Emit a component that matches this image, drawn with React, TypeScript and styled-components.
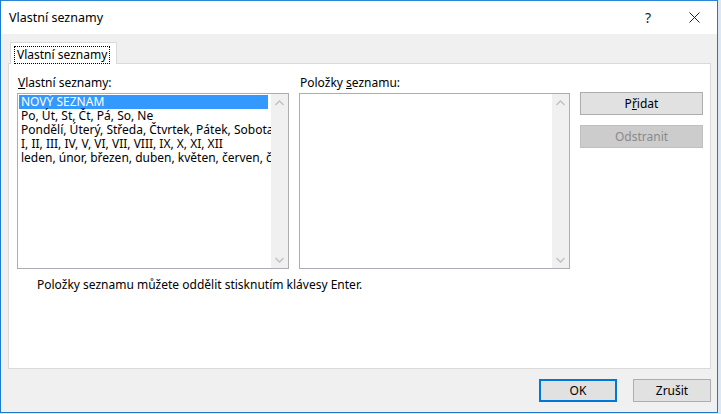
import React from "react";
import styled, { createGlobalStyle } from "styled-components";

const GlobalStyle = createGlobalStyle`
  html, body {
    margin: 0;
    padding: 0;
    background: #dbe7f4;
  }
  body {
    font-family: "Segoe UI", "Noto Sans", "Open Sans", sans-serif;
    font-size: 12px;
    color: #000;
  }
`;

const Window = styled.div`
  width: 718px;
  height: 413px;
  box-sizing: border-box;
  border: 1px solid #1b7ad2;
  border-top-color: #2b86d9;
  background: #f0f0f0;
  display: flex;
  flex-direction: column;
`;

const TitleBar = styled.div`
  height: 33px;
  background: #fff;
  display: flex;
  align-items: center;
  padding-left: 8px;
  flex-shrink: 0;
`;

const Title = styled.div`
  flex: 1;
  font-size: 12.5px;
`;

const CaptionButton = styled.div`
  width: 46px;
  height: 33px;
  display: flex;
  align-items: center;
  justify-content: center;
  color: #222;
  font-size: 14px;
`;

const Body = styled.div`
  flex: 1;
  display: flex;
  flex-direction: column;
  padding: 8px 6px 0 7px;
`;

const TabStrip = styled.div`
  display: flex;
  padding-left: 2px;
  margin-bottom: -1px;
  position: relative;
  z-index: 1;
`;

const Tab = styled.div`
  height: 22px;
  box-sizing: border-box;
  background: #fff;
  border: 1px solid #d9d9d9;
  border-bottom: none;
  padding: 3px 6px 0 3px;
`;

const TabFocus = styled.div`
  border: 1px dotted #000;
  padding: 0 2px;
  line-height: 16px;
`;

const TabPage = styled.div`
  height: 306px;
  box-sizing: border-box;
  background: #fff;
  border: 1px solid #d9d9d9;
  padding: 11px 8px 0 8px;
`;

const Columns = styled.div`
  display: grid;
  grid-template-columns: 272px 271px 123px;
  grid-template-rows: 18px 176px;
  column-gap: 10px;
`;

const Label = styled.div`
  line-height: 16px;
  padding-left: 1px;
  color: #000;
`;

const ListBox = styled.div`
  border: 1px solid #abadb3;
  box-sizing: border-box;
  display: flex;
  background: #fff;
`;

const Items = styled.div`
  flex: 1;
  padding: 1px 3px 0 1px;
  overflow: hidden;
`;

const Item = styled.div<{ $selected?: boolean }>`
  height: 14px;
  line-height: 14px;
  padding-left: 2px;
  white-space: nowrap;
  background: ${(p) => (p.$selected ? "#3399ff" : "transparent")};
  color: ${(p) => (p.$selected ? "#fff" : "#000")};
`;

const ScrollBar = styled.div`
  width: 17px;
  background: #f0f0f0;
  display: flex;
  flex-direction: column;
  justify-content: space-between;
`;

const ScrollButton = styled.div`
  height: 17px;
  display: flex;
  align-items: center;
  justify-content: center;
`;

const Arrow = styled.svg`
  width: 9px;
  height: 6px;
  fill: none;
  stroke: #bfbfbf;
  stroke-width: 1.3;
`;

const ButtonColumn = styled.div`
  display: flex;
  flex-direction: column;
  gap: 10px;
  margin-top: -1px;
`;

const Button = styled.div<{ $disabled?: boolean; $default?: boolean }>`
  height: 23px;
  box-sizing: border-box;
  display: flex;
  align-items: center;
  justify-content: center;
  background: ${(p) => (p.$disabled ? "#cccccc" : "#e1e1e1")};
  border: ${(p) =>
    p.$default ? "2px solid #0078d7" : p.$disabled ? "1px solid #bfbfbf" : "1px solid #adadad"};
  color: ${(p) => (p.$disabled ? "#8a8a8a" : "#000")};
`;

const Hint = styled.div`
  margin: 8px 0 0 20px;
  line-height: 16px;
`;

const Footer = styled.div`
  display: flex;
  justify-content: flex-end;
  gap: 16px;
  padding-top: 10px;
`;

const FooterButton = styled(Button)`
  width: 78px;
`;

const UpArrow = () => (
  <ScrollButton>
    <Arrow viewBox="0 0 9 6">
      <path d="M0.5 5 L4.5 1 L8.5 5" />
    </Arrow>
  </ScrollButton>
);

const DownArrow = () => (
  <ScrollButton>
    <Arrow viewBox="0 0 9 6">
      <path d="M0.5 1 L4.5 5 L8.5 1" />
    </Arrow>
  </ScrollButton>
);

const lists = [
  "NOVÝ SEZNAM",
  "Po, Út, St, Čt, Pá, So, Ne",
  "Pondělí, Úterý, Středa, Čtvrtek, Pátek, Sobota, Neděle",
  "I, II, III, IV, V, VI, VII, VIII, IX, X, XI, XII",
  "leden, únor, březen, duben, květen, červen, červenec",
];

export default function App() {
  return (
    <>
      <GlobalStyle />
      <Window>
        <TitleBar>
          <Title>Vlastní seznamy</Title>
          <CaptionButton>?</CaptionButton>
          <CaptionButton>
            <svg width="11" height="11" viewBox="0 0 11 11">
              <path d="M0.5 0.5 L10.5 10.5 M10.5 0.5 L0.5 10.5" stroke="#222" strokeWidth="1" />
            </svg>
          </CaptionButton>
        </TitleBar>
        <Body>
          <TabStrip>
            <Tab>
              <TabFocus>Vlastní seznamy</TabFocus>
            </Tab>
          </TabStrip>
          <TabPage>
            <Columns>
              <Label>
                <u>V</u>lastní seznamy:
              </Label>
              <Label>
                Položky <u>s</u>eznamu:
              </Label>
              <div />
              <ListBox>
                <Items>
                  {lists.map((l, i) => (
                    <Item key={l} $selected={i === 0}>
                      {l}
                    </Item>
                  ))}
                </Items>
                <ScrollBar>
                  <UpArrow />
                  <DownArrow />
                </ScrollBar>
              </ListBox>
              <ListBox>
                <Items />
                <ScrollBar>
                  <UpArrow />
                  <DownArrow />
                </ScrollBar>
              </ListBox>
              <ButtonColumn>
                <Button>
                  P<u>ř</u>idat
                </Button>
                <Button $disabled>Odstranit</Button>
              </ButtonColumn>
            </Columns>
            <Hint>Položky seznamu můžete oddělit stisknutím klávesy Enter.</Hint>
          </TabPage>
          <Footer>
            <FooterButton $default>OK</FooterButton>
            <FooterButton>Zrušit</FooterButton>
          </Footer>
        </Body>
      </Window>
    </>
  );
}
